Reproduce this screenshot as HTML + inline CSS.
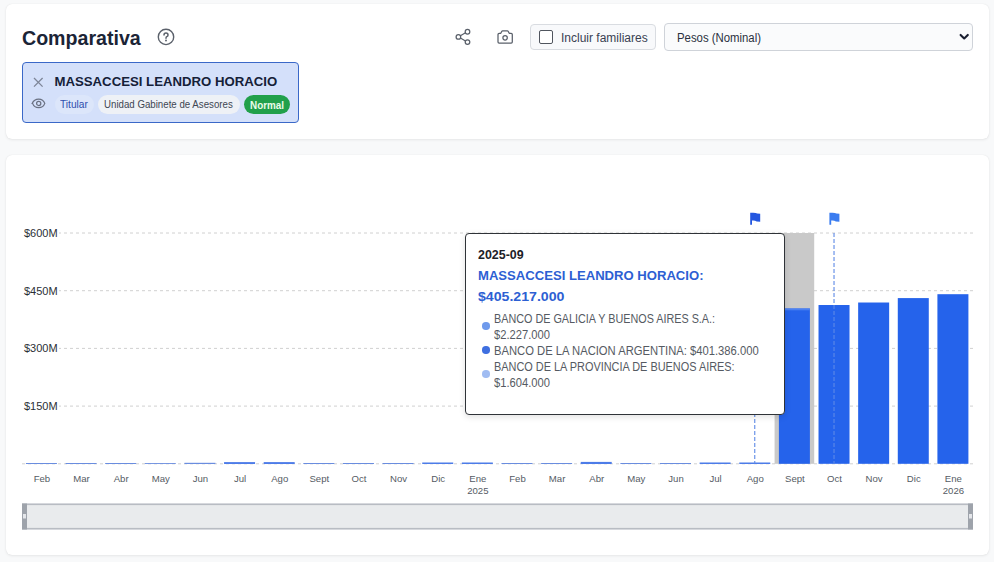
<!DOCTYPE html>
<html><head><meta charset="utf-8">
<style>
*{box-sizing:border-box;margin:0;padding:0}
html,body{width:994px;height:562px;overflow:hidden;background:#f8f9fa;font-family:"Liberation Sans",sans-serif}
.abs{position:absolute}
.card{position:absolute;left:6px;width:983px;background:#fff;border-radius:6px;box-shadow:0 0 1px rgba(0,0,0,0.10),0 1px 3px rgba(0,0,0,0.07)}
#c1{top:4px;height:135px}
#c2{top:155px;height:400px}
.t{position:absolute;white-space:nowrap;line-height:1;transform-origin:0 0}
svg text{font-family:"Liberation Sans",sans-serif}
</style></head><body>
<div class="card" id="c1"></div>
<div class="card" id="c2"></div>

<!-- header -->
<div class="t" style="left:22px;top:29.2px;font-size:19.6px;font-weight:bold;color:#1b2436">Comparativa</div>
<svg class="abs" style="left:156px;top:27px" width="20" height="20" viewBox="0 0 20 20">
  <circle cx="10.0" cy="9.9" r="7.7" fill="none" stroke="#5b616b" stroke-width="1.4"/>
  <path d="M8.0 8.0 Q8.0 6.0 10.0 6.0 Q12.0 6.0 12.0 7.9 Q12.0 9.1 10.8 9.7 Q10.0 10.1 10.0 11.2" fill="none" stroke="#5b616b" stroke-width="1.5" stroke-linecap="round"/>
  <circle cx="10.0" cy="13.5" r="0.95" fill="#5b616b"/>
</svg>

<!-- share -->
<svg class="abs" style="left:450px;top:24px" width="26" height="26" viewBox="0 0 26 26">
  <g fill="none" stroke="#5a606a" stroke-width="1.25">
    <circle cx="8.4" cy="12.9" r="2.3"/>
    <circle cx="17.5" cy="7.7" r="2.3"/>
    <circle cx="17.5" cy="18.1" r="2.3"/>
    <path d="M10.4 11.8 L15.5 8.8 M10.4 14.0 L15.5 17.0"/>
  </g>
</svg>
<!-- camera -->
<svg class="abs" style="left:492px;top:24px" width="26" height="26" viewBox="0 0 26 26">
  <g fill="none" stroke="#5a606a" stroke-width="1.25" stroke-linejoin="round">
    <path d="M6.0 10.4 Q6.0 9.3 7.1 9.3 L8.8 9.3 L9.7 7.5 Q10.0 6.9 10.7 6.9 L15.3 6.9 Q16.0 6.9 16.3 7.5 L17.2 9.3 L19.2 9.3 Q20.3 9.3 20.3 10.4 L20.3 18.0 Q20.3 19.1 19.2 19.1 L7.1 19.1 Q6.0 19.1 6.0 18.0 Z"/>
    <circle cx="13.1" cy="13.8" r="2.2"/>
  </g>
</svg>

<!-- checkbox button -->
<div class="abs" style="left:530px;top:24px;width:126px;height:26px;border:1px solid #d9dce1;border-radius:4px;background:#f8f9fb"></div>
<div class="abs" style="left:539px;top:30px;width:14px;height:14px;border:1.3px solid #50555e;border-radius:2px;background:#fff"></div>
<div class="t" style="left:561px;top:32px;font-size:12px;color:#3a4152">Incluir familiares</div>

<!-- select -->
<div class="abs" style="left:664px;top:23px;width:309px;height:28px;border:1px solid #cfd3d9;border-radius:4px;background:#fafbfc"></div>
<div class="t" style="left:677px;top:32px;font-size:12px;color:#2a3140;transform:scaleX(0.947)">Pesos (Nominal)</div>
<svg class="abs" style="left:958px;top:32px" width="13" height="10" viewBox="0 0 13 10">
  <path d="M2.6 2.9 L6.2 6.5 L9.8 2.9" fill="none" stroke="#1a1f30" stroke-width="2.1" stroke-linecap="round" stroke-linejoin="round"/>
</svg>

<!-- person card -->
<div class="abs" style="left:22px;top:62px;width:277px;height:61px;border:1px solid #3a68c8;border-radius:4px;background:#d4e0fa"></div>
<svg class="abs" style="left:31px;top:75px" width="14" height="14" viewBox="0 0 14 14">
  <path d="M3.0 3.0 L11.6 11.6 M11.6 3.0 L3.0 11.6" stroke="#7d8598" stroke-width="1.3"/>
</svg>
<div class="t" style="left:54.5px;top:74.5px;font-size:13.2px;font-weight:bold;color:#152038">MASSACCESI LEANDRO HORACIO</div>
<svg class="abs" style="left:30px;top:96px" width="17" height="14" viewBox="0 0 17 14">
  <path d="M2.2 7.4 C4.7 1.7 12.7 1.7 14.8 7.4 C12.7 13.1 4.7 13.1 2.6 7.4 Z" fill="none" stroke="#6a7182" stroke-width="1.25"/>
  <circle cx="8.7" cy="7.4" r="2.1" fill="none" stroke="#6a7182" stroke-width="1.25"/>
</svg>
<div class="abs" style="left:55px;top:95px;width:39px;height:19px;border-radius:10px;background:#dce6fa"></div>
<div class="t" style="left:60px;top:99.4px;font-size:11px;color:#2e4fae;transform:scaleX(0.924)">Titular</div>
<div class="abs" style="left:98px;top:95px;width:142px;height:19px;border-radius:10px;background:#eef1f6"></div>
<div class="t" style="left:104px;top:99.4px;font-size:11px;color:#404653;transform:scaleX(0.881)">Unidad Gabinete de Asesores</div>
<div class="abs" style="left:244px;top:95px;width:46px;height:19px;border-radius:10px;background:#21a04b"></div>
<div class="t" style="left:250px;top:99.7px;font-size:11px;font-weight:bold;color:#eafbe9;transform:scaleX(0.897)">Normal</div>

<!-- chart -->
<svg class="abs" style="left:0;top:0" width="994" height="562">
<line x1="22" y1="233.00" x2="974" y2="233.00" stroke="#d0d0d0" stroke-width="1" stroke-dasharray="3,3"/>
<line x1="22" y1="290.70" x2="974" y2="290.70" stroke="#d0d0d0" stroke-width="1" stroke-dasharray="3,3"/>
<line x1="22" y1="348.40" x2="974" y2="348.40" stroke="#d0d0d0" stroke-width="1" stroke-dasharray="3,3"/>
<line x1="22" y1="406.10" x2="974" y2="406.10" stroke="#d0d0d0" stroke-width="1" stroke-dasharray="3,3"/>
<line x1="22" y1="463.80" x2="974" y2="463.80" stroke="#d0d0d0" stroke-width="1" stroke-dasharray="3,3"/>
<rect x="774.57" y="233" width="39.63" height="230.80" fill="#c9c9c9"/>
<rect x="22" y="227.00" width="37" height="12" fill="#fff"/>
<text x="24" y="237.00" font-size="11" fill="#2b2f36">$600M</text>
<rect x="22" y="284.70" width="37" height="12" fill="#fff"/>
<text x="24" y="294.70" font-size="11" fill="#2b2f36">$450M</text>
<rect x="22" y="342.40" width="37" height="12" fill="#fff"/>
<text x="24" y="352.40" font-size="11" fill="#2b2f36">$300M</text>
<rect x="22" y="400.10" width="37" height="12" fill="#fff"/>
<text x="24" y="410.10" font-size="11" fill="#2b2f36">$150M</text>
<rect x="25.92" y="463.00" width="31" height="1.00" fill="#6a8ddf"/>
<rect x="65.55" y="463.00" width="31" height="1.00" fill="#6a8ddf"/>
<rect x="105.18" y="463.00" width="31" height="1.00" fill="#6a8ddf"/>
<rect x="144.81" y="463.10" width="31" height="0.90" fill="#6a8ddf"/>
<rect x="184.44" y="462.80" width="31" height="1.20" fill="#6a8ddf"/>
<rect x="224.06" y="462.10" width="31" height="1.90" fill="#4d7ce8"/>
<rect x="263.70" y="462.10" width="31" height="1.90" fill="#4d7ce8"/>
<rect x="303.33" y="463.00" width="31" height="1.00" fill="#6a8ddf"/>
<rect x="342.96" y="463.00" width="31" height="1.00" fill="#6a8ddf"/>
<rect x="382.59" y="463.00" width="31" height="1.00" fill="#6a8ddf"/>
<rect x="422.22" y="462.50" width="31" height="1.50" fill="#4d7ce8"/>
<rect x="461.85" y="462.50" width="31" height="1.50" fill="#4d7ce8"/>
<rect x="501.48" y="463.00" width="31" height="1.00" fill="#6a8ddf"/>
<rect x="541.11" y="463.00" width="31" height="1.00" fill="#6a8ddf"/>
<rect x="580.74" y="461.90" width="31" height="2.10" fill="#4d7ce8"/>
<rect x="620.37" y="463.00" width="31" height="1.00" fill="#6a8ddf"/>
<rect x="660.00" y="463.00" width="31" height="1.00" fill="#6a8ddf"/>
<rect x="699.63" y="462.50" width="31" height="1.50" fill="#4d7ce8"/>
<rect x="739.26" y="462.50" width="31" height="1.50" fill="#4d7ce8"/>
<rect x="778.89" y="308.51" width="31" height="155.29" fill="#2563eb"/>
<rect x="818.52" y="305.01" width="31" height="158.79" fill="#2563eb"/>
<rect x="858.15" y="302.51" width="31" height="161.29" fill="#2563eb"/>
<rect x="897.78" y="298.09" width="31" height="165.71" fill="#2563eb"/>
<rect x="937.41" y="294.20" width="31" height="169.60" fill="#2563eb"/>
<rect x="778.89" y="308.51" width="31" height="1.8" fill="#4a80f2"/>
<line x1="754.76" y1="233" x2="754.76" y2="463.80" stroke="#5d8ae6" stroke-width="1.1" stroke-dasharray="4,2"/>
<line x1="834.02" y1="233" x2="834.02" y2="463.80" stroke="#5d8ae6" stroke-width="1.1" stroke-dasharray="4,2"/>
<path d="M750.2 212.8 L753.2 212.8 Q756.2 213.0 757.2 213.6 L760.2 213.8 L760.2 221.7 L756.7 221.5 Q755.2 220.7 753.2 220.6 L752.0 220.6 L752.0 224.8 L750.2 224.8 Z" fill="#2457e0"/>
<path d="M829.4 212.8 L832.4 212.8 Q835.4 213.0 836.4 213.6 L839.4 213.8 L839.4 221.7 L835.9 221.5 Q834.4 220.7 832.4 220.6 L831.1999999999999 220.6 L831.1999999999999 224.8 L829.4 224.8 Z" fill="#3a7cf0"/>
<text x="41.92" y="482" font-size="9.6" fill="#555b64" text-anchor="middle">Feb</text>
<text x="81.55" y="482" font-size="9.6" fill="#555b64" text-anchor="middle">Mar</text>
<text x="121.18" y="482" font-size="9.6" fill="#555b64" text-anchor="middle">Abr</text>
<text x="160.81" y="482" font-size="9.6" fill="#555b64" text-anchor="middle">May</text>
<text x="200.44" y="482" font-size="9.6" fill="#555b64" text-anchor="middle">Jun</text>
<text x="240.06" y="482" font-size="9.6" fill="#555b64" text-anchor="middle">Jul</text>
<text x="279.70" y="482" font-size="9.6" fill="#555b64" text-anchor="middle">Ago</text>
<text x="319.33" y="482" font-size="9.6" fill="#555b64" text-anchor="middle">Sept</text>
<text x="358.96" y="482" font-size="9.6" fill="#555b64" text-anchor="middle">Oct</text>
<text x="398.59" y="482" font-size="9.6" fill="#555b64" text-anchor="middle">Nov</text>
<text x="438.22" y="482" font-size="9.6" fill="#555b64" text-anchor="middle">Dic</text>
<text x="477.85" y="482" font-size="9.6" fill="#555b64" text-anchor="middle">Ene</text>
<text x="517.48" y="482" font-size="9.6" fill="#555b64" text-anchor="middle">Feb</text>
<text x="557.11" y="482" font-size="9.6" fill="#555b64" text-anchor="middle">Mar</text>
<text x="596.74" y="482" font-size="9.6" fill="#555b64" text-anchor="middle">Abr</text>
<text x="636.37" y="482" font-size="9.6" fill="#555b64" text-anchor="middle">May</text>
<text x="676.00" y="482" font-size="9.6" fill="#555b64" text-anchor="middle">Jun</text>
<text x="715.63" y="482" font-size="9.6" fill="#555b64" text-anchor="middle">Jul</text>
<text x="755.26" y="482" font-size="9.6" fill="#555b64" text-anchor="middle">Ago</text>
<text x="794.89" y="482" font-size="9.6" fill="#555b64" text-anchor="middle">Sept</text>
<text x="834.52" y="482" font-size="9.6" fill="#555b64" text-anchor="middle">Oct</text>
<text x="874.15" y="482" font-size="9.6" fill="#555b64" text-anchor="middle">Nov</text>
<text x="913.78" y="482" font-size="9.6" fill="#555b64" text-anchor="middle">Dic</text>
<text x="953.41" y="482" font-size="9.6" fill="#555b64" text-anchor="middle">Ene</text>
<text x="477.85" y="494" font-size="9.6" fill="#555b64" text-anchor="middle">2025</text>
<text x="953.41" y="494" font-size="9.6" fill="#555b64" text-anchor="middle">2026</text>
<rect x="22" y="503.5" width="951" height="26" fill="#e9ebed"/>
<rect x="22" y="503.5" width="951" height="1.6" fill="#b8bcc3"/>
<rect x="22" y="527.9" width="951" height="1.6" fill="#b8bcc3"/>
<rect x="22" y="503.5" width="5" height="26" fill="#9ea3ab"/>
<rect x="968" y="503.5" width="5" height="26" fill="#9ea3ab"/>
<rect x="23" y="514" width="3" height="4.5" fill="#e4e6ea"/>
<rect x="969" y="514" width="3" height="4.5" fill="#e4e6ea"/>
</svg>

<!-- tooltip -->
<div class="abs" style="left:465px;top:233px;width:320px;height:182px;border:1.3px solid #2f3338;border-radius:4px;background:#fff;box-shadow:0 2px 6px rgba(0,0,0,0.12)"></div>
<div class="t" style="left:478px;top:249px;font-size:12px;font-weight:bold;color:#1d2127;transform:scaleX(1.035)">2025-09</div>
<div class="t" style="left:478px;top:269px;font-size:13.1px;font-weight:bold;color:#2d5fd3">MASSACCESI LEANDRO HORACIO:</div>
<div class="t" style="left:478px;top:289.5px;font-size:13px;font-weight:bold;color:#2d5fd3;transform:scaleX(1.087)">$405.217.000</div>
<div class="abs" style="left:482px;top:322px;width:7.5px;height:7.5px;border-radius:50%;background:#6f9aec"></div>
<div class="abs" style="left:482px;top:346px;width:7.5px;height:7.5px;border-radius:50%;background:#3f6fe0"></div>
<div class="abs" style="left:482px;top:370px;width:7.5px;height:7.5px;border-radius:50%;background:#a0bcf2"></div>
<div class="t" style="left:494px;top:313px;font-size:12px;color:#555a62;transform:scaleX(0.90)">BANCO DE GALICIA Y BUENOS AIRES S.A.:</div>
<div class="t" style="left:494px;top:329px;font-size:12px;color:#555a62;transform:scaleX(0.933)">$2.227.000</div>
<div class="t" style="left:494px;top:345px;font-size:12px;color:#555a62;transform:scaleX(0.936)">BANCO DE LA NACION ARGENTINA: $401.386.000</div>
<div class="t" style="left:494px;top:361px;font-size:12px;color:#555a62;transform:scaleX(0.909)">BANCO DE LA PROVINCIA DE BUENOS AIRES:</div>
<div class="t" style="left:494px;top:377px;font-size:12px;color:#555a62;transform:scaleX(0.933)">$1.604.000</div>

</body></html>
